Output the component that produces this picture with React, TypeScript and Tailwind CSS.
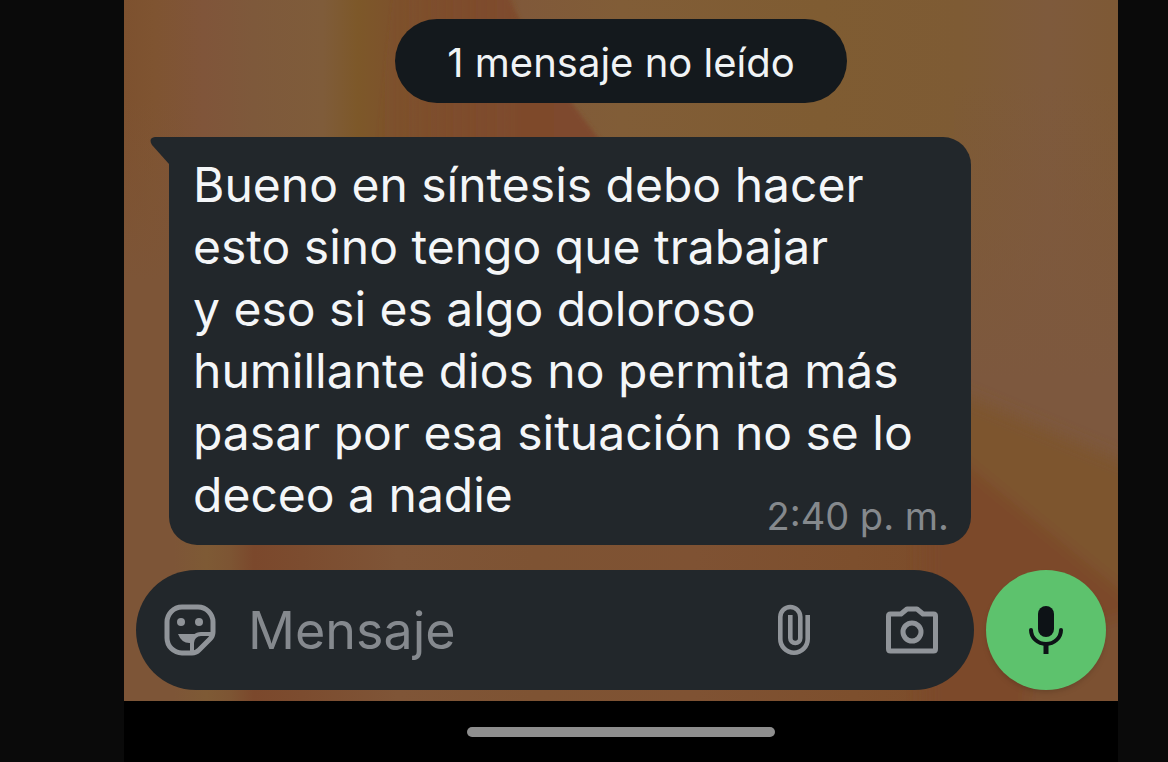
import { useState } from "react";

const unreadLabel = "1 mensaje no leído";

const message = {
  lines: [
    "Bueno en síntesis debo hacer",
    "esto sino tengo que trabajar",
    "y eso si es algo doloroso",
    "humillante dios no permita más",
    "pasar por esa situación no se lo",
    "deceo a nadie",
  ],
  time: "2:40 p. m.",
};

function Wallpaper() {
  return (
    <svg
      className="absolute inset-0 -z-10 h-full w-full"
      viewBox="0 0 994 701"
      preserveAspectRatio="none"
      aria-hidden="true"
    >
      <defs>
        <linearGradient id="base" x1="0" y1="0" x2="1" y2="0">
          <stop offset="0" stopColor="#7d512f" />
          <stop offset="0.03" stopColor="#7f5431" />
          <stop offset="0.08" stopColor="#80553a" />
          <stop offset="0.13" stopColor="#7e593b" />
          <stop offset="0.2" stopColor="#7f5c3a" />
          <stop offset="0.235" stopColor="#7d5829" />
          <stop offset="0.27" stopColor="#7d522c" />
          <stop offset="0.36" stopColor="#7e4f2c" />
          <stop offset="0.4" stopColor="#80593a" />
          <stop offset="0.5" stopColor="#815d37" />
          <stop offset="0.7" stopColor="#7f5c32" />
          <stop offset="0.84" stopColor="#7e5b34" />
          <stop offset="0.93" stopColor="#7e5a3c" />
          <stop offset="1" stopColor="#7e5935" />
        </linearGradient>
        <linearGradient id="lower" x1="0" y1="0" x2="1" y2="0">
          <stop offset="0" stopColor="#7d5537" />
          <stop offset="0.04" stopColor="#7e5a35" />
          <stop offset="0.07" stopColor="#7d5533" />
          <stop offset="0.1" stopColor="#7b482c" />
          <stop offset="0.16" stopColor="#7c4c2f" />
          <stop offset="0.28" stopColor="#7f5537" />
          <stop offset="0.45" stopColor="#7e5333" />
          <stop offset="0.65" stopColor="#7f5233" />
          <stop offset="0.85" stopColor="#7d4f2d" />
          <stop offset="1" stopColor="#7c4b29" />
        </linearGradient>
        <linearGradient id="edge" x1="0" y1="0" x2="0" y2="1">
          <stop offset="0" stopColor="#7d5537" stopOpacity="0" />
          <stop offset="0.3" stopColor="#7d5537" />
          <stop offset="1" stopColor="#7d5537" />
        </linearGradient>
        <linearGradient id="warm" x1="0" y1="0" x2="0" y2="1">
          <stop offset="0" stopColor="#7d583e" stopOpacity="0" />
          <stop offset="1" stopColor="#7d583e" />
        </linearGradient>
        <linearGradient id="petal" x1="0" y1="0" x2="1" y2="0">
          <stop offset="0" stopColor="#7e4a2c" stopOpacity="0" />
          <stop offset="0.6" stopColor="#7e4a2c" />
          <stop offset="1" stopColor="#7f482e" />
        </linearGradient>
        <filter id="soft">
          <feGaussianBlur stdDeviation="8" />
        </filter>
        <filter id="crisp">
          <feGaussianBlur stdDeviation="2" />
        </filter>
      </defs>
      <rect width="994" height="701" fill="url(#base)" />
      <rect x="830" y="80" width="164" height="300" fill="url(#warm)" />
      <rect x="830" y="380" width="164" height="321" fill="#7d583e" />
      <rect y="100" width="60" height="601" fill="url(#edge)" />
      <rect x="50" y="500" width="800" height="201" fill="url(#lower)" />
      <path d="M270-10H382Q410 60 492 160H250z" fill="url(#petal)" filter="url(#crisp)" />
      <g filter="url(#soft)">
        <path d="M780 370L1020 470V720H840z" fill="#7d542e" />
        <path d="M800 430L1020 610V720H800z" fill="#7b4a2a" />
        <path d="M910 640L1020 610V720H900z" fill="#7c5130" />
      </g>
    </svg>
  );
}

function StickerIcon() {
  return (
    <svg viewBox="0 0 52 52" className="size-13" fill="none" stroke="currentColor" strokeWidth="5" strokeLinejoin="round">
      <path d="M18 3h16a15 15 0 0 1 15 15v10q0 4-3 7L35 46q-3 3-7 3H18A15 15 0 0 1 3 34V18A15 15 0 0 1 18 3z" />
      <path d="M28 48V39a9 9 0 0 1 9-9h11" strokeWidth="4" />
      <circle cx="17" cy="18" r="4" fill="currentColor" stroke="none" />
      <circle cx="35" cy="18" r="4" fill="currentColor" stroke="none" />
      <path d="M14 30h20q-6 3-7 9-9 1-13-9z" fill="currentColor" stroke="none" />
    </svg>
  );
}

function ClipIcon() {
  return (
    <svg viewBox="0 0 34 52" className="h-13 w-[34px]" fill="none" stroke="currentColor" strokeWidth="4.6">
      <path d="M30.7 11v24a13.7 13.7 0 0 1-27.4 0V13a10 10 0 0 1 20 0v21a5 5 0 0 1-10 0V11" />
    </svg>
  );
}

function CameraIcon() {
  return (
    <svg viewBox="0 0 52 48" className="h-12 w-13" fill="none" stroke="currentColor" strokeWidth="5" strokeLinejoin="round">
      <path d="M4.500 8H15l6-5h10l6 5h10.500q2 0 2 2v33q0 2-2 2h-43q-2 0-2-2V10q0-2 2-2z" />
      <circle cx="26" cy="26" r="9" />
    </svg>
  );
}

function MicIcon() {
  return (
    <svg viewBox="0 0 36 50" className="h-[50px] w-9" fill="none" stroke="currentColor" strokeWidth="4">
      <rect x="10" y="1" width="16" height="31" rx="8" fill="currentColor" stroke="none" />
      <path d="M3 25a15 14 0 0 0 30 0" strokeLinecap="round" />
      <path d="M18 39v10" strokeWidth="5" />
    </svg>
  );
}

function MessageBubble() {
  const lastLine = message.lines[message.lines.length - 1];

  return (
    <article className="relative mr-[147px] ml-[45px] rounded-[28px] rounded-tl-none bg-[#22272b] pt-[17px] pr-[22px] pb-[10px] pl-6">
      <svg viewBox="0 0 20 28" className="absolute top-0 -left-[19px] h-7 w-5 text-[#22272b]" aria-hidden="true">
        <path d="M20 0H5Q-2 1 2 8L19 27h1z" fill="currentColor" />
      </svg>
      <div className="text-5xl leading-[62px] whitespace-nowrap text-[#f4f6f8]">
        {message.lines.slice(0, -1).map((line) => (
          <p key={line}>{line}</p>
        ))}
        <div className="flex justify-between">
          <p>{lastLine}</p>
          <time className="pt-[33px] text-[38px] leading-[38px] text-[#85898d]">{message.time}</time>
        </div>
      </div>
    </article>
  );
}

function Composer() {
  const [draft, setDraft] = useState("");

  return (
    <form className="flex gap-3 px-3 pb-[11px]" onSubmit={(e) => e.preventDefault()}>
      <div className="flex h-[120px] min-w-0 flex-1 items-center rounded-full bg-[#22272b] pr-9 pl-7 text-[#909499]">
        <button type="button" aria-label="Stickers">
          <StickerIcon />
        </button>
        <input
          type="text"
          aria-label="Mensaje"
          placeholder="Mensaje"
          value={draft}
          onChange={(e) => setDraft(e.target.value)}
          className="ml-8 h-20 min-w-0 flex-1 bg-transparent text-[52px] text-[#f4f6f8] outline-none placeholder:text-[#85898e]"
        />
        <button type="button" aria-label="Adjuntar">
          <ClipIcon />
        </button>
        <button type="button" aria-label="Cámara" className="ml-[75px]">
          <CameraIcon />
        </button>
      </div>
      <button
        type="button"
        aria-label="Grabar audio"
        className="flex size-[120px] shrink-0 items-center justify-center rounded-full bg-[#5dc26d] text-[#0d1216] shadow-md"
      >
        <MicIcon />
      </button>
    </form>
  );
}

export default function App() {
  return (
    <div className="min-h-screen bg-[#0a0a0a] pr-[50px] pl-[124px] font-['Inter',sans-serif]">
      <div className="flex min-h-screen flex-col bg-black">
        <main className="relative isolate flex flex-1 flex-col overflow-hidden">
          <Wallpaper />
          <div className="mt-[19px] flex h-[84px] w-[452px] items-center justify-center self-center rounded-[42px] bg-[#14191d] pt-1 text-[40px] text-[#f0f3f5]">
            {unreadLabel}
          </div>
          <div className="mt-[34px]">
            <MessageBubble />
          </div>
          <div className="mt-auto">
            <Composer />
          </div>
        </main>
        <footer className="flex h-[61px] items-center justify-center">
          <div className="h-[10px] w-[308px] rounded-full bg-[#8e8e8e]" />
        </footer>
      </div>
    </div>
  );
}
